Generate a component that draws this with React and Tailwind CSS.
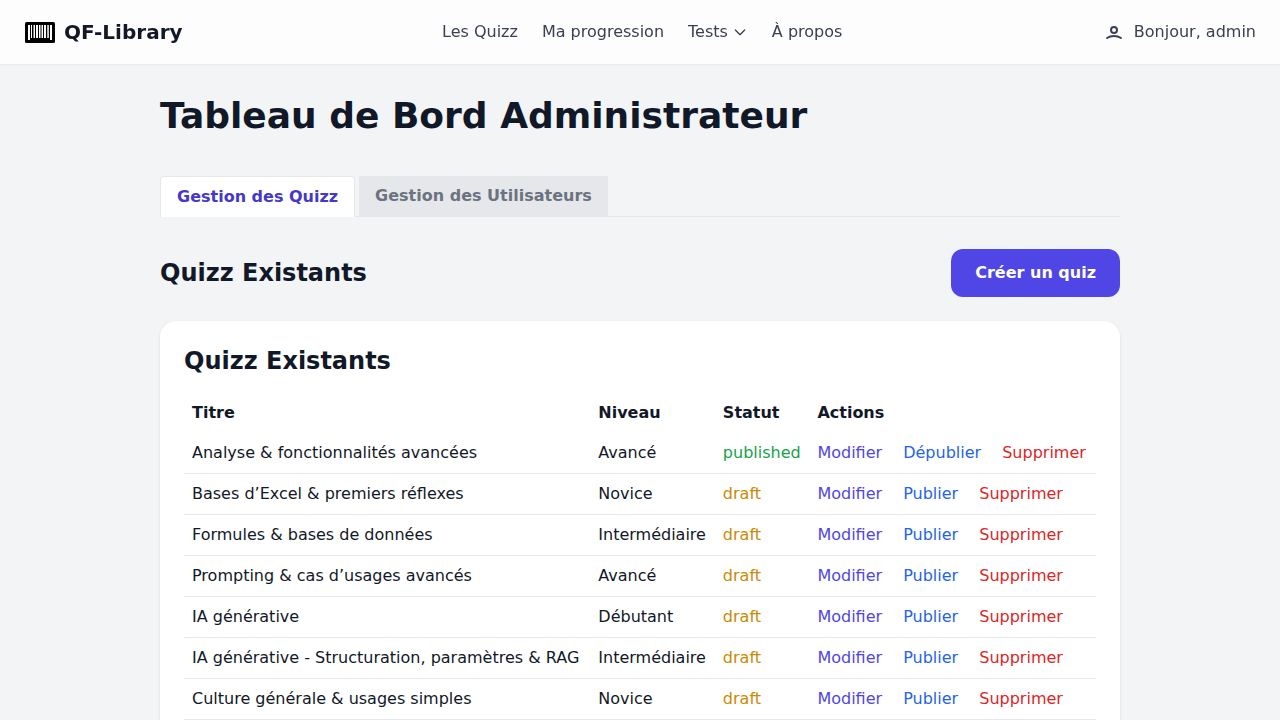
const quizzes = [
  ['Analyse & fonctionnalités avancées', 'Avancé', 'published'],
  ['Bases d’Excel & premiers réflexes', 'Novice', 'draft'],
  ['Formules & bases de données', 'Intermédiaire', 'draft'],
  ['Prompting & cas d’usages avancés', 'Avancé', 'draft'],
  ['IA générative', 'Débutant', 'draft'],
  ['IA générative - Structuration, paramètres & RAG', 'Intermédiaire', 'draft'],
  ['Culture générale & usages simples', 'Novice', 'draft'],
];

function Logo() {
  return (
    <svg width="32" height="32" viewBox="0 0 32 32">
      <rect x="1" y="6" width="30" height="21" rx="1.6" fill="#000" />
      <g fill="#fff">
        <rect x="4" y="9" width="2" height="15" />
        <rect x="7" y="9" width="1" height="13" />
        <rect x="9.500" y="9" width="1.500" height="13" />
        <rect x="12" y="9" width="2" height="13" />
        <rect x="15" y="9" width="1.500" height="13" />
        <rect x="17.500" y="9" width="1.500" height="13" />
        <rect x="20" y="9" width="2" height="13" />
        <rect x="23.300" y="9" width="1.500" height="13" />
        <rect x="26" y="9" width="2" height="15" />
      </g>
    </svg>
  );
}

function Header() {
  return (
    <header className="sticky top-0 z-10 h-16 bg-white/80 shadow-xs backdrop-blur">
      <div className="flex h-16 items-center justify-between px-6 text-[#374151]">
        <a className="flex items-center gap-2 text-xl font-bold text-[#111827]">
          <Logo />
          QF-Library
        </a>
        <nav className="flex items-center gap-6">
          <a>Les Quizz</a>
          <a>Ma progression</a>
          <a className="flex items-center gap-1">
            Tests
            <svg className="size-4" fill="none" viewBox="0 0 24 24" stroke="currentColor" strokeWidth="2" strokeLinecap="round" strokeLinejoin="round">
              <path d="M19 9l-7 7-7-7" />
            </svg>
          </a>
          <a>À propos</a>
        </nav>
        <div className="flex items-center gap-2">
          <svg className="size-6" fill="none" viewBox="0 0 24 24" stroke="currentColor" strokeWidth="2" strokeLinecap="round">
            <circle cx="12" cy="10" r="3" />
            <path d="M5 18c4-2.700 10-2.700 14 0" />
          </svg>
          Bonjour, admin
        </div>
      </div>
    </header>
  );
}

function QuizRow({ title, level, status }) {
  const published = status === 'published';
  return (
    <tr className="border-b border-[#e5e7eb]">
      <td className="p-2">{title}</td>
      <td className="p-2">{level}</td>
      <td className={published ? 'p-2 text-[#16a34a]' : 'p-2 text-[#ca8a04]'}>{status}</td>
      <td className="p-2">
        <button className="text-[#4f46e5]">Modifier</button>{' '}
        <button className="ml-4 text-[#2563eb]">{published ? 'Dépublier' : 'Publier'}</button>{' '}
        <button className="ml-4 text-[#dc2626]">Supprimer</button>
      </td>
    </tr>
  );
}

export default function App() {
  return (
    <div className="h-screen overflow-hidden bg-[#f3f4f6] font-['DejaVu_Sans',sans-serif] text-base text-[#111827]">
      <Header />
      <main className="mx-auto w-[960px] pt-8">
        <h1 className="mb-10 text-4xl leading-10 font-bold">Tableau de Bord Administrateur</h1>
        <div className="flex border-b border-[#e5e7eb]">
          <button className="-mb-px mr-1 rounded-t border-x border-t border-[#e5e7eb] bg-white px-4 py-2 font-semibold text-[#4338ca]">
            Gestion des Quizz
          </button>
          <button className="bg-[#e5e7eb] px-4 py-2 font-semibold text-[#6b7280]">Gestion des Utilisateurs</button>
        </div>
        <div className="mt-8 mb-6 flex items-center justify-between">
          <h2 className="text-2xl font-bold">Quizz Existants</h2>
          <button className="rounded-xl bg-[#4f46e5] px-6 py-3 font-semibold text-white">Créer un quiz</button>
        </div>
        <section className="rounded-2xl bg-white p-6 shadow-sm">
          <h2 className="mb-4 text-2xl font-bold">Quizz Existants</h2>
          <table className="w-full text-left">
            <thead>
              <tr>
                <th className="p-2">Titre</th>
                <th className="p-2">Niveau</th>
                <th className="p-2">Statut</th>
                <th className="p-2">Actions</th>
              </tr>
            </thead>
            <tbody>
              {quizzes.map(([title, level, status]) => (
                <QuizRow key={title} title={title} level={level} status={status} />
              ))}
            </tbody>
          </table>
        </section>
      </main>
    </div>
  );
}
